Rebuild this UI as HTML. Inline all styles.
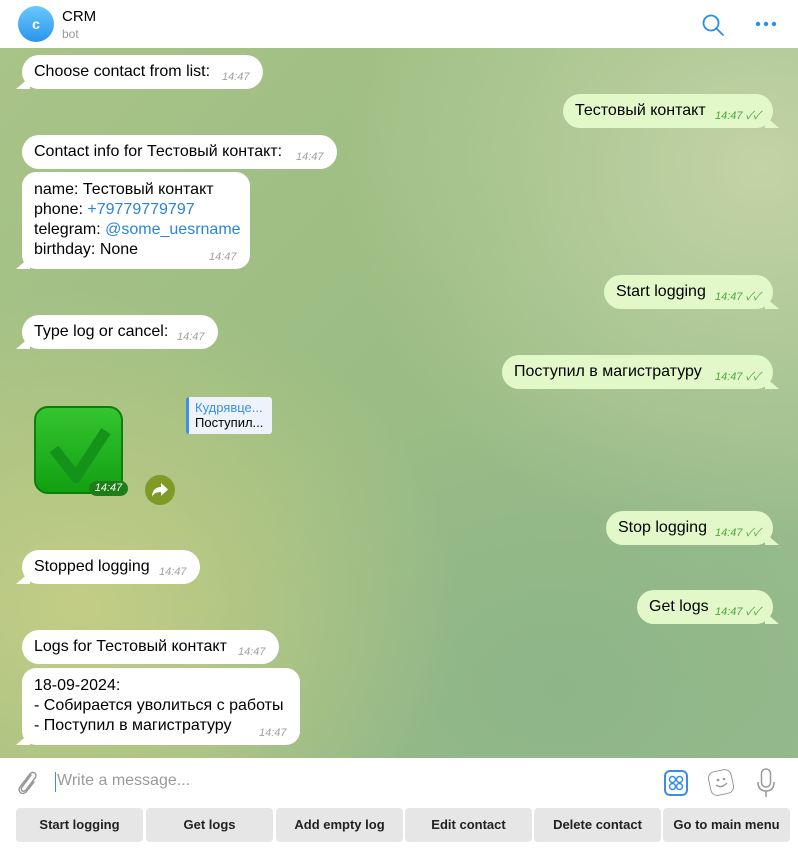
<!DOCTYPE html>
<html><head><meta charset="utf-8"><style>
*{margin:0;padding:0;box-sizing:border-box}
body{width:798px;height:849px;overflow:hidden;position:relative;font-family:"Liberation Sans","Noto Sans CJK SC",sans-serif;background:#fff}
#bg{position:absolute;left:0;top:48px;width:798px;height:710px;
background:radial-gradient(ellipse 420px 380px at 760px 120px,#c3d3a6 0%,rgba(195,211,166,0) 100%),
radial-gradient(ellipse 380px 320px at 80px 560px,#c3cd84 0%,rgba(195,205,132,0) 100%),
radial-gradient(ellipse 400px 300px at 560px 640px,#8db588 0%,rgba(141,181,136,0) 100%),
linear-gradient(135deg,#a9c388 0%,#9bbd83 45%,#98bb8f 100%)}
.hdr{position:absolute;left:0;top:0;width:798px;height:48px;background:#fff}
.av{position:absolute;left:18px;top:6px;width:36px;height:36px;border-radius:50%;background:linear-gradient(#6ac8fb,#2a95ec);color:#fff;font-weight:bold;font-size:14px;text-align:center;line-height:36px}
.b{position:absolute;height:34px;border-radius:17px;font-size:16px;line-height:34px;padding-left:12px;color:#000;white-space:nowrap}
.in{background:#fff}
.out{background:#e2f8c9}
.t{font-style:italic;font-size:11px;color:#a0a0a0;position:absolute;bottom:6px;line-height:12px}
.out .t{color:#4ea83c}
.tail-l{position:absolute;left:-6px;bottom:0;width:14px;height:12px;background:#fff;clip-path:polygon(0 100%,100% 0,100% 100%)}
.tail-r{position:absolute;right:-6px;bottom:0;width:14px;height:12px;background:#e2f8c9;clip-path:polygon(0 0,100% 100%,0 100%)}
.btn{position:absolute;top:808px;width:127px;height:34px;background:#e6e6e6;border-radius:4px;font-size:13px;font-weight:bold;text-align:center;line-height:34px;color:#222}
a{color:#2a85d8}
</style></head><body>
<div id="bg"></div>
<div class="hdr"><div class="av">c</div>
<div style="position:absolute;left:62px;top:8px;font-size:15px">CRM</div>
<div style="position:absolute;left:62px;top:27px;font-size:12px;color:#999">bot</div>
<svg style="position:absolute;left:701px;top:13px" width="24" height="24" viewBox="0 0 24 24"><circle cx="10" cy="10" r="7.5" fill="none" stroke="#2a8ee8" stroke-width="1.8"/><path d="M15.5 15.5L22 22" stroke="#2a8ee8" stroke-width="1.8" stroke-linecap="round"/></svg>
<svg style="position:absolute;left:755px;top:21px" width="22" height="6"><circle cx="3" cy="3" r="2.2" fill="#2a8ee8"/><circle cx="11" cy="3" r="2.2" fill="#2a8ee8"/><circle cx="19" cy="3" r="2.2" fill="#2a8ee8"/></svg>
</div>

<div class="b in" style="left:22px;top:55px;width:241px">Choose contact from list:<span class="t" style="left:200px">14:47</span><div class="tail-l"></div></div>
<div class="b out" style="left:563px;top:94px;width:210px">Тестовый контакт<span class="t" style="left:152px">14:47 ✓✓</span><div class="tail-r"></div></div>
<div class="b in" style="left:22px;top:135px;width:315px">Contact info for Тестовый контакт:<span class="t" style="left:274px">14:47</span></div>
<div class="b in" style="left:22px;top:172px;width:228px;height:97px;border-radius:14px;line-height:20px;padding-top:8px">name: Тестовый контакт<br>phone: <a>+79779779797</a><br>telegram: <a>@some_uesrname</a><br>birthday: None<span class="t" style="left:187px">14:47</span><div class="tail-l"></div></div>
<div class="b out" style="left:604px;top:275px;width:169px">Start logging<span class="t" style="left:111px">14:47 ✓✓</span><div class="tail-r"></div></div>
<div class="b in" style="left:22px;top:315px;width:196px">Type log or cancel:<span class="t" style="left:155px">14:47</span><div class="tail-l"></div></div>
<div class="b out" style="left:502px;top:355px;width:271px">Поступил в магистратуру<span class="t" style="left:213px">14:47 ✓✓</span><div class="tail-r"></div></div>

<div style="position:absolute;left:34px;top:406px;width:89px;height:88px;border-radius:14px;background:linear-gradient(#35c52f,#12a012);border:2px solid #0b7e0b"></div>
<svg style="position:absolute;left:48px;top:425px" width="64" height="58"><path d="M6 24L28 52L58 6" fill="none" stroke="#14921a" stroke-width="11"/></svg>
<div style="position:absolute;left:89px;top:481px;width:39px;height:15px;border-radius:8px;background:#1d7d18;color:#fff;font-size:11px;font-style:italic;text-align:center;line-height:15px">14:47</div>
<div style="position:absolute;left:186px;top:397px;width:86px;height:37px;background:#eef3fb;border-radius:3px;border-left:3px solid #3e8fe0;font-size:13px;padding:3px 0 0 6px;line-height:15px;white-space:nowrap;overflow:hidden"><span style="color:#3e8fe0">Кудрявце...</span><br>Поступил...</div>
<div style="position:absolute;left:145px;top:475px;width:30px;height:30px;border-radius:50%;background:#7f9b25"></div>
<svg style="position:absolute;left:151px;top:482px" width="18" height="16"><path d="M10 1L17 7.5L10 14V10C5 10 2 12 1 15C1 9 4 5 10 5Z" fill="#fff"/></svg>

<div class="b out" style="left:606px;top:511px;width:167px">Stop logging<span class="t" style="left:109px">14:47 ✓✓</span><div class="tail-r"></div></div>
<div class="b in" style="left:22px;top:550px;width:178px">Stopped logging<span class="t" style="left:137px">14:47</span><div class="tail-l"></div></div>
<div class="b out" style="left:637px;top:590px;width:136px">Get logs<span class="t" style="left:78px">14:47 ✓✓</span><div class="tail-r"></div></div>
<div class="b in" style="left:22px;top:630px;width:257px">Logs for Тестовый контакт<span class="t" style="left:216px">14:47</span></div>
<div class="b in" style="left:22px;top:668px;width:278px;height:77px;border-radius:14px;line-height:20px;padding-top:8px">18-09-2024:<br>- Собирается уволиться с работы<br>- Поступил в магистратуру<span class="t" style="left:237px">14:47</span><div class="tail-l"></div></div>

<svg style="position:absolute;left:14px;top:768px" width="26" height="28" viewBox="0 0 26 28"><path d="M17 7L8 19C6 22 9 25 12 22L21 10C24 6 19 2 16 6L6 19C3 23 8 28 12 24L20 14" fill="none" stroke="#999" stroke-width="1.5" stroke-linecap="round"/></svg>
<div style="position:absolute;left:55px;top:772px;width:1px;height:20px;background:#3a8ee6"></div>
<div style="position:absolute;left:57px;top:772px;font-size:16px;color:#9a9a9a">Write a message...</div>
<div style="position:absolute;left:664px;top:770px;width:24px;height:26px;border:2px solid #3a8ee6;border-radius:6px"></div>
<svg style="position:absolute;left:668px;top:775px" width="16" height="16"><circle cx="4.5" cy="4.5" r="3" fill="none" stroke="#3a8ee6" stroke-width="1.5"/><circle cx="11.5" cy="4.5" r="3" fill="none" stroke="#3a8ee6" stroke-width="1.5"/><circle cx="4.5" cy="11.5" r="3" fill="none" stroke="#3a8ee6" stroke-width="1.5"/><circle cx="11.5" cy="11.5" r="3" fill="none" stroke="#3a8ee6" stroke-width="1.5"/></svg>
<div style="position:absolute;left:709px;top:770px;width:24px;height:25px;border:1.5px solid #999;border-radius:7px;transform:rotate(-12deg)"></div>
<svg style="position:absolute;left:712px;top:775px" width="18" height="16"><circle cx="6" cy="5" r="1.3" fill="#999"/><circle cx="12" cy="4" r="1.3" fill="#999"/><path d="M4 10Q9 14 15 8" fill="none" stroke="#999" stroke-width="1.4"/></svg>
<svg style="position:absolute;left:756px;top:768px" width="20" height="30"><rect x="5.5" y="1" width="9" height="18" rx="4.5" fill="none" stroke="#999" stroke-width="1.5"/><path d="M2 14Q2 23 10 23Q18 23 18 14M10 23V29" fill="none" stroke="#999" stroke-width="1.5"/></svg>

<div class="btn" style="left:16px">Start logging</div>
<div class="btn" style="left:146px">Get logs</div>
<div class="btn" style="left:276px">Add empty log</div>
<div class="btn" style="left:405px">Edit contact</div>
<div class="btn" style="left:534px">Delete contact</div>
<div class="btn" style="left:663px">Go to main menu</div>
</body></html>
